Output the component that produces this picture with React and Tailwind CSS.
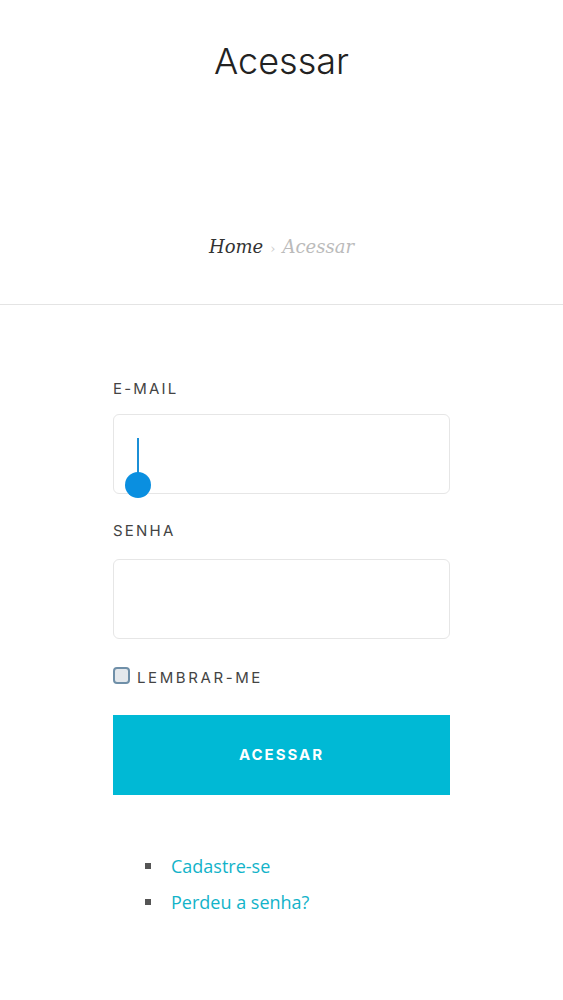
export default function App() {
  return (
    <div className="min-h-screen bg-white" style={{ fontFamily: 'Inter, "Open Sans", sans-serif' }}>
      {/* Page header */}
      <header className="border-b border-[#e4e4e4]">
        <h1 className="pt-[38px] text-center text-[36px] font-light leading-[46px] text-[#222]">Acessar</h1>
        <nav className="pt-[148px] pb-[40px] text-center text-[18px] italic leading-[30px]" style={{ fontFamily: '"DejaVu Serif", "Liberation Serif", serif' }}>
          <span className="text-[#333]">Home</span>
          <span className="mx-[7px] text-[13px] not-italic text-[#ccc]">›</span>
          <span className="text-[#bbb]">Acessar</span>
        </nav>
      </header>

      {/* Login form */}
      <main className="mx-auto w-[337px] pt-[74px]">
        <label className="block text-[15px] leading-[20px] tracking-[2.2px] text-[#444]">E-MAIL</label>
        <div className="relative mt-[15px] h-[80px] rounded-[6px] border border-[#e6e6e6]">
          <div className="absolute left-[23px] top-[23px] h-[40px] w-[2px] bg-[#1b8fd6]" />
          <div className="absolute left-[11px] top-[57px] h-[26px] w-[26px] rounded-full bg-[#0a8fe0]" />
        </div>

        <label className="mt-[27px] block text-[15px] leading-[20px] tracking-[2.2px] text-[#444]">SENHA</label>
        <div className="mt-[18px] h-[80px] rounded-[6px] border border-[#e6e6e6]" />

        <div className="mt-[23px] flex items-center">
          <span className="h-[17px] w-[17px] rounded-[4px] border-2 border-[#6f8fa8] bg-[#e4e8ec]" />
          <span className="ml-[7px] mt-[6px] text-[15px] leading-[20px] tracking-[2.6px] text-[#444]">LEMBRAR-ME</span>
        </div>

        <button className="mt-[27px] flex h-[80px] w-full items-center justify-center bg-[#00b9d5] text-[15px] font-bold tracking-[2px] text-white">
          ACESSAR
        </button>

        <ul className="mt-[59px] space-y-[12px] pl-[32px] text-[18px] leading-[24px]" style={{ fontFamily: '"Open Sans", "Noto Sans", sans-serif' }}>
          <li className="flex items-center">
            <span className="mr-[20px] h-[6px] w-[6px] bg-[#555]" />
            <span className="text-[#12b3c9]">Cadastre-se</span>
          </li>
          <li className="flex items-center">
            <span className="mr-[20px] h-[6px] w-[6px] bg-[#555]" />
            <span className="text-[#12b3c9]">Perdeu a senha?</span>
          </li>
        </ul>
      </main>
    </div>
  )
}
